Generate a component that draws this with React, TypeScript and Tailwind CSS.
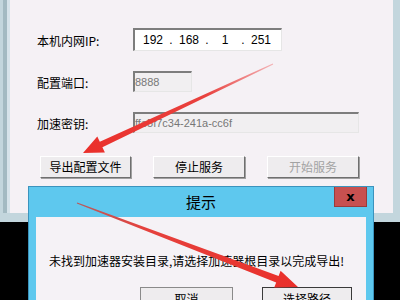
import React from 'react';

const CJK = { fontFamily: '"Noto Sans CJK SC", "Liberation Sans", sans-serif' };

const sunken = 'border-t-2 border-l-2 border-b border-r border-t-[#7d7d7d] border-l-[#7d7d7d] border-b-[#e6e6e6] border-r-[#e6e6e6]';
const raised = 'border border-t-white border-l-white border-b-[#6f6f6f] border-r-[#6f6f6f] shadow-[1px_1px_0_#a0a0a0] bg-[#eeecee]';

function Arrows() {
  return (
    <svg className="absolute inset-0 pointer-events-none" width="400" height="300" viewBox="0 0 400 300">
      <defs>
        <linearGradient id="a1" gradientUnits="userSpaceOnUse" x1="273" y1="64" x2="83" y2="153">
          <stop offset="0" stopColor="#f3b3b6" />
          <stop offset="0.35" stopColor="#e9423f" />
          <stop offset="1" stopColor="#ea2f2a" />
        </linearGradient>
        <linearGradient id="a2" gradientUnits="userSpaceOnUse" x1="77" y1="203" x2="298" y2="287">
          <stop offset="0" stopColor="#b85a5c" />
          <stop offset="0.3" stopColor="#e5423e" />
          <stop offset="1" stopColor="#ea2f2a" />
        </linearGradient>
      </defs>
      <polygon
        fill="url(#a1)"
        points="273.2,64.5 102.4,147.2 104.9,152.6 83,153 97.3,136.4 99.8,141.8 272.8,63.5"
      />
      <polygon
        fill="url(#a2)"
        points="77.2,202.5 278.6,275.9 280.6,270.8 298,287 274.2,287.6 276.2,282.5 76.8,203.5"
      />
    </svg>
  );
}

export default function App() {
  return (
    <div className="relative w-[400px] h-[300px] bg-black overflow-hidden" style={CJK}>
      {/* main window */}
      <div className="h-[222px] bg-[#c3d6dd] pl-[3px] pr-[7px] pb-[9px] flex">
        <div className="w-[4px] bg-[#a3bac2]" />
        <div className="w-[3px] bg-[#d6e3ea]" />
        <div className="flex-1 bg-[#f5f1f5] pt-[28px] pl-[27px] text-[12px] text-black">
          <div className="flex items-center h-[23px]">
            <span className="w-[96px] mt-[3px]">本机内网IP:</span>
            <div className={`w-[149px] h-[23px] bg-white flex items-center ${sunken}`} style={{ fontFamily: '"Liberation Sans", sans-serif' }}>
              <span className="w-[5px]" />
              <span className="w-[26px] text-center">192</span>
              <span className="w-[10px] text-center">.</span>
              <span className="w-[26px] text-center">168</span>
              <span className="w-[10px] text-center">.</span>
              <span className="w-[26px] text-center">1</span>
              <span className="w-[10px] text-center">.</span>
              <span className="w-[26px] text-center">251</span>
            </div>
          </div>
          <div className="flex items-center h-[21px] mt-[20px]">
            <span className="w-[96px] mt-[3px]">配置端口:</span>
            <div className={`w-[59px] h-[21px] bg-[#f1eff1] flex items-center text-[#777] text-[11px] ${sunken}`} style={{ fontFamily: '"Liberation Sans", sans-serif' }}>
              8888
            </div>
          </div>
          <div className="flex items-center h-[21px] mt-[20px]">
            <span className="w-[96px] mt-[3px]">加速密钥:</span>
            <div className={`w-[226px] h-[21px] bg-[#f1eff1] flex items-center text-[#777] text-[11px] ${sunken}`} style={{ fontFamily: '"Liberation Sans", sans-serif' }}>
              ffe5f7c34-241a-cc6f
            </div>
          </div>
          <div className="flex mt-[23px] pl-[3px] gap-[22px]">
            <div className={`w-[91px] h-[22px] flex items-center justify-center ${raised}`}>导出配置文件</div>
            <div className={`w-[92px] h-[22px] flex items-center justify-center ${raised}`}>停止服务</div>
            <div className={`w-[92px] h-[22px] flex items-center justify-center text-[#a3a3a3] ${raised}`}>开始服务</div>
          </div>
        </div>
      </div>

      {/* dialog */}
      <div className="absolute left-[28px] top-[186px] w-[346px] h-[130px] bg-[#5ec8ee] border border-[#3b93bd] flex flex-col px-[7px]">
        <div className="relative h-[30px] flex items-center justify-center text-[15px] text-black pt-[1px]">
          提示
          <div className="absolute right-[-1px] top-0 w-[33px] h-[20px] bg-[#c75050] border border-[#9a3b3b] border-t-0 flex items-center justify-center text-black font-bold text-[13px] leading-none" style={{ fontFamily: '"DejaVu Sans", sans-serif' }}>
            x
          </div>
        </div>
        <div className="flex-1 bg-[#f5f2f6] pt-[35px] pl-[13px] text-[12px] text-black">
          <div>未找到加速器安装目录,请选择加速器根目录以完成导出!</div>
          <div className="flex mt-[17px] pl-[91px]">
            <div className="w-[93px] h-[22px] bg-[#eeecee] border border-[#8a8a8a] flex justify-center pt-[2px]">取消</div>
            <div className="w-[90px] h-[22px] ml-[29px] bg-[#eeecee] border border-[#3a3a3a] flex justify-center pt-[2px]">选择路径</div>
          </div>
        </div>
      </div>

      <Arrows />
    </div>
  );
}
